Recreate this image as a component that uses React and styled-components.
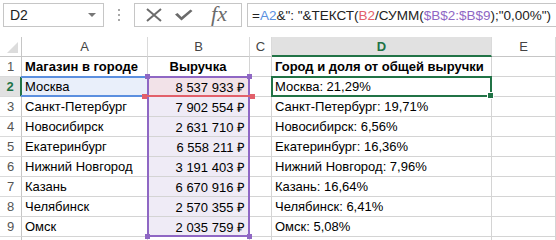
import React from 'react';
import styled, { createGlobalStyle, css } from 'styled-components';

const Global = createGlobalStyle`
  html, body { margin: 0; padding: 0; background: #fff; }
  body { font-family: "Liberation Sans", Arial, sans-serif; overflow: hidden; }
`;

const Page = styled.div`
  width: 556px;
  height: 240px;
  overflow: hidden;
  background: #fff;
`;

const Toolbar = styled.div`
  display: flex;
  align-items: flex-start;
  height: 37px;
  padding: 3px 0 0 3px;
  box-sizing: border-box;
`;

const NameBox = styled.div`
  width: 101px;
  height: 24px;
  box-sizing: border-box;
  border: 1px solid #c6c6c6;
  display: flex;
  align-items: center;
  justify-content: space-between;
  padding: 0 7px 0 6px;
  font-size: 14px;
  color: #222;
`;

const DropArrow = styled.span`
  width: 0;
  height: 0;
  border-left: 4px solid transparent;
  border-right: 4px solid transparent;
  border-top: 4px solid #777;
`;

const Dots = styled.div`
  display: flex;
  flex-direction: column;
  gap: 3px;
  margin: 6px 14px 0 14px;
  span { width: 2px; height: 2px; background: #a8a8a8; display: block; }
`;

const FxBox = styled.div`
  width: 108px;
  height: 24px;
  box-sizing: border-box;
  border: 1px solid #c6c6c6;
  display: flex;
  align-items: center;
  padding: 0 0 0 8px;
`;

const IconSlot = styled.div`
  width: ${(p) => p.$w}px;
  display: flex;
  align-items: center;
  justify-content: center;
`;

const FxText = styled.span`
  font-family: "Liberation Serif", "DejaVu Serif", serif;
  font-style: italic;
  font-size: 22px;
  color: #6b6b6b;
  line-height: 1;
  margin-top: -2px;
`;

const FormulaBox = styled.div`
  flex: 1;
  margin-left: 5px;
  height: 24px;
  box-sizing: border-box;
  border: 1px solid #c6c6c6;
  border-right: none;
  display: flex;
  align-items: center;
  padding-left: 4px;
  font-size: 13.5px;
  color: #222;
  white-space: nowrap;
  overflow: hidden;
`;

const Ref = styled.span`
  color: ${(p) => p.$c};
`;

const Sheet = styled.div`
  display: grid;
  grid-template-columns: 22px 126px 102px 22px 220px 64px;
  grid-template-rows: 20px repeat(10, 20px);
  font-size: 13px;
  color: #000;
`;

const place = css`
  grid-column: ${(p) => p.$c};
  grid-row: ${(p) => p.$r};
`;

const Corner = styled.div`
  ${place};
  box-sizing: border-box;
  border-right: 1px solid #c6c6c6;
  border-bottom: 1px solid #c6c6c6;
  position: relative;
  &::after {
    content: '';
    position: absolute;
    right: 3px;
    bottom: 3px;
    width: 0;
    height: 0;
    border-left: 11px solid transparent;
    border-bottom: 11px solid #dcdcdc;
  }
`;

const ColHead = styled.div`
  ${place};
  box-sizing: border-box;
  display: flex;
  align-items: center;
  justify-content: center;
  border-right: 1px solid #dadada;
  border-bottom: ${(p) => (p.$active ? '2px solid #217346' : '1px solid #c6c6c6')};
  background: ${(p) => (p.$active ? '#e1e1e1' : '#fff')};
  color: ${(p) => (p.$active ? '#217346' : '#444')};
  font-weight: ${(p) => (p.$active ? 'bold' : 'normal')};
  font-size: 13px;
  padding-top: ${(p) => (p.$active ? '1px' : '0')};
`;

const RowHead = styled.div`
  ${place};
  box-sizing: border-box;
  display: flex;
  align-items: center;
  justify-content: center;
  border-bottom: 1px solid #dadada;
  border-right: ${(p) => (p.$active ? '2px solid #217346' : '1px solid #c6c6c6')};
  background: ${(p) => (p.$active ? '#e1e1e1' : '#fff')};
  color: ${(p) => (p.$active ? '#217346' : '#555')};
  font-weight: ${(p) => (p.$active ? 'bold' : 'normal')};
  font-size: 13px;
`;

const Cell = styled.div`
  ${place};
  box-sizing: border-box;
  border-right: 1px solid #d4d4d4;
  border-bottom: 1px solid #d4d4d4;
  display: flex;
  align-items: center;
  justify-content: ${(p) => (p.$align === 'right' ? 'flex-end' : p.$align === 'center' ? 'center' : 'flex-start')};
  padding: 0 4px 0 3px;
  background: ${(p) => p.$bg || '#fff'};
  font-weight: ${(p) => (p.$bold ? 'bold' : 'normal')};
  white-space: nowrap;
  overflow: visible;
`;

const Frame = styled.div`
  ${place};
  position: relative;
  z-index: ${(p) => p.$z || 2};
  margin: -1px 0 0 -1px;
  pointer-events: none;
  border-style: solid;
  border-color: ${(p) => p.$color};
  border-width: ${(p) => p.$bw || '2px'};
`;

const Handle = styled.span`
  position: absolute;
  width: 5px;
  height: 5px;
  background: ${(p) => p.$color};
  ${(p) => (p.$top ? 'top: -4px;' : 'bottom: -4px;')}
  ${(p) => (p.$left ? `left: ${p.$off || -4}px;` : `right: ${p.$off || -4}px;`)}
  ${(p) => p.$ring && 'border: 1px solid #fff;'}
`;

const stores = [
  ['Москва', '8 537 933 ₽', 'Москва: 21,29%'],
  ['Санкт-Петербург', '7 902 554 ₽', 'Санкт-Петербург: 19,71%'],
  ['Новосибирск', '2 631 710 ₽', 'Новосибирск: 6,56%'],
  ['Екатеринбург', '6 558 211 ₽', 'Екатеринбург: 16,36%'],
  ['Нижний Новгород', '3 191 403 ₽', 'Нижний Новгород: 7,96%'],
  ['Казань', '6 670 916 ₽', 'Казань: 16,64%'],
  ['Челябинск', '2 570 355 ₽', 'Челябинск: 6,41%'],
  ['Омск', '2 035 759 ₽', 'Омск: 5,08%'],
];

const BLUE = '#5b8fdf';
const RED = '#e2606a';
const PURPLE = '#8f67c4';
const GREEN = '#217346';

export default function App() {
  const cols = ['A', 'B', 'C', 'D', 'E'];
  const rows = [];
  rows.push(
    <RowHead key="rh1" $r={2} $c={1}>1</RowHead>,
    <Cell key="a1" $r={2} $c={2} $bold>Магазин в городе</Cell>,
    <Cell key="b1" $r={2} $c={3} $bold $align="center">Выручка</Cell>,
    <Cell key="c1" $r={2} $c={4} />,
    <Cell key="d1" $r={2} $c={5} $bold>Город и доля от общей выручки</Cell>,
    <Cell key="e1" $r={2} $c={6} />
  );
  stores.forEach((s, i) => {
    const r = i + 3;
    const first = i === 0;
    rows.push(
      <RowHead key={`rh${r}`} $r={r} $c={1} $active={first}>{i + 2}</RowHead>,
      <Cell key={`a${r}`} $r={r} $c={2} $bg={first ? '#e9effa' : '#fff'}>{s[0]}</Cell>,
      <Cell key={`b${r}`} $r={r} $c={3} $align="right" $bg={first ? '#f2e2e8' : '#efebf6'}>{s[1]}</Cell>,
      <Cell key={`c${r}`} $r={r} $c={4} />,
      <Cell key={`d${r}`} $r={r} $c={5}>{s[2]}</Cell>,
      <Cell key={`e${r}`} $r={r} $c={6} />
    );
  });
  rows.push(
    <RowHead key="rh11" $r={11} $c={1} />,
    ...[2, 3, 4, 5, 6].map((c) => <Cell key={`x${c}`} $r={11} $c={c} />)
  );

  return (
    <Page>
      <Global />
      <Toolbar>
        <NameBox>
          <span>D2</span>
          <DropArrow />
        </NameBox>
        <Dots>
          <span />
          <span />
          <span />
        </Dots>
        <FxBox>
          <IconSlot $w={22}>
            <svg width="18" height="14" viewBox="0 0 18 14">
              <path d="M2 1 L16 13 M16 1 L2 13" stroke="#6b6b6b" strokeWidth="2" fill="none" />
            </svg>
          </IconSlot>
          <IconSlot $w={36}>
            <svg width="19" height="12" viewBox="0 0 19 12">
              <path d="M1 5.5 L3.5 4 L7.5 8 L16.5 0.5 L18.5 2 L7.5 11.5 Z" fill="#6b6b6b" />
            </svg>
          </IconSlot>
          <IconSlot $w={36}>
            <FxText>fx</FxText>
          </IconSlot>
        </FxBox>
        <FormulaBox>
          =<Ref $c={BLUE}>A2</Ref>&amp;": "&amp;ТЕКСТ(<Ref $c={RED}>B2</Ref>/СУММ(
          <Ref $c={PURPLE}>$B$2:$B$9</Ref>);"0,00%")
        </FormulaBox>
      </Toolbar>
      <Sheet>
        <Corner $r={1} $c={1} />
        {cols.map((c, i) => (
          <ColHead key={c} $r={1} $c={i + 2} $active={c === 'D'}>
            {c}
          </ColHead>
        ))}
        {rows}
        <Frame $r={3} $c={2} $color={BLUE} $bw="2px 0 2px 0" />
        <Frame $r="3 / 11" $c={3} $color={PURPLE} $z={3}>
          <Handle $color={PURPLE} $top $left />
          <Handle $color={PURPLE} $top />
          <Handle $color={PURPLE} $left />
          <Handle $color={PURPLE} />
        </Frame>
        <Frame $r={3} $c={3} $color={RED} $bw="0 0 2px 0" $z={4}>
          <Handle $color={RED} $left $off={-5} />
          <Handle $color={RED} $off={-5} />
        </Frame>
        <Frame $r={3} $c={5} $color={GREEN} $z={5}>
          <Handle $color={GREEN} $ring />
        </Frame>
      </Sheet>
    </Page>
  );
}
